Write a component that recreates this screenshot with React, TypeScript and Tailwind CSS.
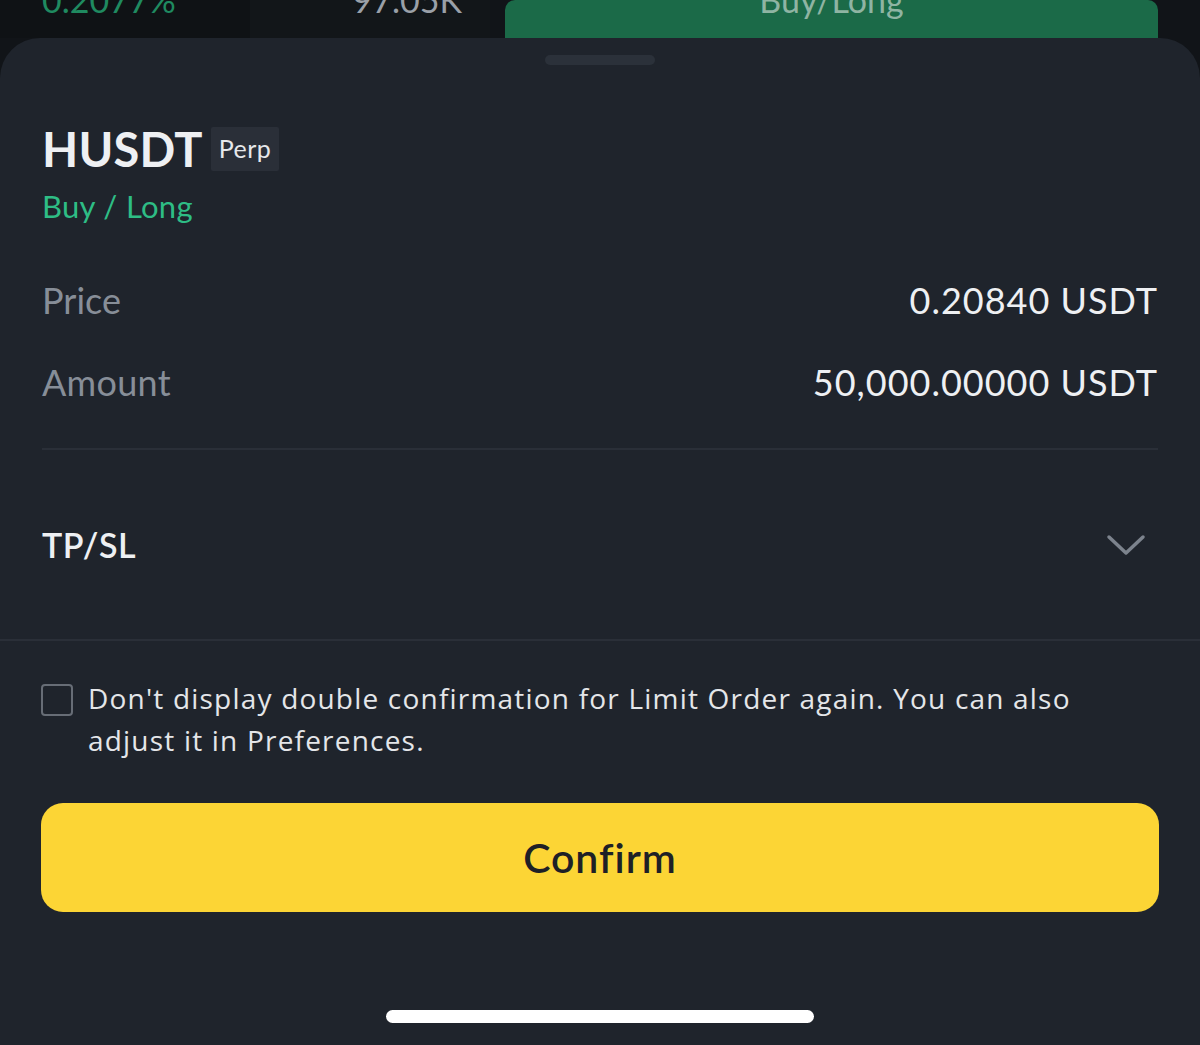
import React, { useState } from 'react';

const font = { fontFamily: 'Lato, "Noto Sans", sans-serif' };

export default function App() {
  const [skip, setSkip] = useState(false);

  return (
    <div className="w-[1200px] h-[1045px] bg-[#111418] overflow-hidden flex flex-col" style={font}>
      {/* order book row behind the sheet */}
      <div className="h-[38px] shrink-0 flex overflow-hidden">
        <div className="w-[250px] bg-[#0f1215] pl-[42px] overflow-hidden">
          <div className="-mt-[22px] text-[34px] leading-[44px] text-[#1f8a60]">0.2077%</div>
        </div>
        <div className="w-[240px] bg-[#121619] flex justify-end pr-[28px] overflow-hidden">
          <div className="-mt-[22px] text-[34px] leading-[44px] text-[#9aa0a8]">97.05K</div>
        </div>
        <div className="w-[15px]" />
        <div className="w-[653px] bg-[#1b6a48] rounded-t-[10px] flex justify-center overflow-hidden">
          <div className="-mt-[22px] text-[34px] leading-[44px] text-[#8fb4a3]">Buy/Long</div>
        </div>
      </div>

      {/* bottom sheet */}
      <div className="flex-1 bg-[#1f242c] rounded-t-[40px] flex flex-col">
        <div className="flex justify-center pt-[17px]">
          <div className="w-[110px] h-[10px] rounded-full bg-[#2b313a]" />
        </div>

        <div className="px-[42px] pt-[56px]">
          <div className="flex items-center gap-[8px]">
            <span className="text-[47px] leading-[56px] font-bold text-[#eef0f3] tracking-[0.2px]">HUSDT</span>
            <span className="h-[44px] px-[8px] flex items-center bg-[#2a2f38] text-[25px] text-[#e6e8eb] rounded-[2px] tracking-[0.5px]">Perp</span>
          </div>
          <div className="text-[31px] leading-[40px] text-[#2ebd85] mt-[9px] tracking-[0.3px]">Buy / Long</div>
        </div>

        <div className="px-[42px] pt-[52px]">
          <div className="flex justify-between items-center h-[44px]">
            <span className="text-[36px] text-[#878e98]">Price</span>
            <span className="text-[36px] text-[#eef0f3] tracking-[1px]">0.20840 USDT</span>
          </div>
          <div className="flex justify-between items-center h-[44px] mt-[38px]">
            <span className="text-[36px] text-[#878e98] tracking-[0.3px]">Amount</span>
            <span className="text-[36px] text-[#eef0f3] tracking-[1px]">50,000.00000 USDT</span>
          </div>
        </div>

        <div className="mx-[42px] mt-[44px] h-[2px] bg-[#2a2f38]" />

        <div className="px-[42px] h-[189px] flex items-center justify-between">
          <span className="text-[34px] font-semibold text-[#eef0f3] tracking-[0.6px]">TP/SL</span>
          <svg width="40" height="24" viewBox="0 0 40 24" fill="none" className="mr-[12px]">
            <path d="M3 4 L20 20 L37 4" stroke="#7c838d" strokeWidth="3.5" strokeLinecap="round" strokeLinejoin="round" />
          </svg>
        </div>

        <div className="h-[2px] bg-[#2a2f38]" />

        <div className="px-[41px] pt-[41px] flex items-start gap-[15px]">
          <button
            onClick={() => setSkip(!skip)}
            className="w-[32px] h-[32px] mt-[2px] shrink-0 rounded-[4px] border-2 border-[#676d76]"
          />
          <p
            className="text-[28px] leading-[42px] text-[#e4e6e9] -mt-[5px] w-[1020px] tracking-[1.2px]"
            style={{ fontFamily: '"Open Sans", Lato, sans-serif' }}
          >
            Don't display double confirmation for Limit Order again. You can also adjust it in Preferences.
          </p>
        </div>

        <div className="px-[41px] pt-[42px]">
          <button className="w-full h-[109px] rounded-[22px] bg-[#fcd535] text-[41px] font-semibold text-[#1e2026] tracking-[1px]">
            Confirm
          </button>
        </div>

        <div className="flex-1" />
        <div className="flex justify-center pb-[22px]">
          <div className="w-[428px] h-[13px] rounded-full bg-white" />
        </div>
      </div>
    </div>
  );
}
